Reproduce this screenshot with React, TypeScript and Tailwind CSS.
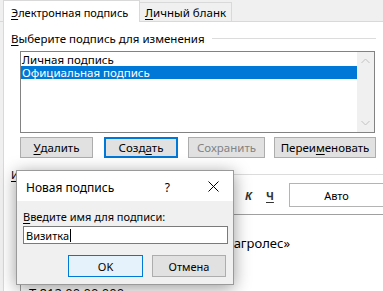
import type { ReactNode } from 'react';

function Key({ children }: { children: ReactNode }) {
  return <span className="underline decoration-1 underline-offset-[2px]">{children}</span>;
}

function Button({
  children,
  width,
  className = '',
  disabled,
  focused,
}: {
  children: ReactNode;
  width: string;
  className?: string;
  disabled?: boolean;
  focused?: boolean;
}) {
  return (
    <div
      className={`flex h-[21px] items-center justify-center ${width} ${className} ${
        focused ? 'border-2 border-[#0078d7] bg-[#e1e1e1]' : 'border border-[#adadad] bg-[#e1e1e1]'
      } ${disabled ? 'text-[#838383]' : 'text-black'}`}
    >
      {children}
    </div>
  );
}

function NewSignatureDialog() {
  return (
    <div className="absolute left-[16px] top-[170px] flex h-[115px] w-[218px] flex-col border border-[#9a9a9a] bg-[#f0f0f0] shadow-[0_3px_16px_rgba(0,0,0,0.4)]">
      <div className="flex h-[30px] shrink-0 items-center bg-white pl-[9px]">
        <span className="flex-1 pt-[2px] text-[12px]">Новая подпись</span>
        <span className="mr-[38px] pt-[2px] text-[12px]">?</span>
        <svg className="mr-[14px]" width="11" height="11" viewBox="0 0 11 11">
          <path d="M0.5 0.5L10.5 10.5M10.5 0.5L0.5 10.5" stroke="#000" strokeWidth="1" />
        </svg>
      </div>
      <div className="flex flex-1 flex-col px-[6px] pt-[8px]">
        <div className="h-[15px] leading-[15px]">
          <Key>В</Key>ведите имя для подписи:
        </div>
        <div className="mt-[2px] flex h-[18px] w-[205px] items-center border border-[#7a7a7a] bg-white pl-[2px]">
          Визитка
          <span className="ml-[1px] h-[13px] w-px bg-black" />
        </div>
        <div className="mt-[11px] flex justify-end gap-[9px] pr-[1px]">
          <div className="flex h-[22px] w-[75px] items-center justify-center border border-[#0078d7] bg-[#e5f1fb]">
            OK
          </div>
          <div className="flex h-[22px] w-[74px] items-center justify-center border border-[#adadad] bg-[#e1e1e1]">
            Отмена
          </div>
        </div>
      </div>
    </div>
  );
}

export default function App() {
  return (
    <div className="relative flex h-[291px] w-[383px] flex-col overflow-hidden bg-[#f0f0f0] font-['Noto_Sans','Liberation_Sans',sans-serif] text-[11px] leading-[15px] text-black">
      {/* tabs */}
      <div className="flex h-[22px] shrink-0 items-end">
        <div className="h-full w-[3px] border-b border-[#d9d9d9]" />
        <div className="flex h-[22px] w-[137px] items-center border-x border-t border-[#d9d9d9] bg-white pl-[7px] pt-[1px] text-[11px]">
          <Key>Э</Key>лектронная подпись
        </div>
        <div className="flex h-[20px] w-[92px] items-center border border-l-0 border-[#d9d9d9] bg-[#f0f0f0] pl-[5px] pt-[1px] text-[11.5px]">
          <Key>Л</Key>ичный бланк
        </div>
        <div className="h-full flex-1 border-b border-[#d9d9d9]" />
      </div>

      {/* page */}
      <div className="ml-[3px] flex flex-1 flex-col border-l border-[#d9d9d9] bg-white">
        <div className="mt-[9px] mr-[7px] flex h-[15px] items-center pl-[7px]">
          <span className="text-[11.5px]">
            <Key>В</Key>ыберите подпись для изменения
          </span>
          <div className="ml-[7px] h-px flex-1 bg-[#dcdcdc]" />
        </div>

        <div className="ml-[16px] mt-[5px] flex h-[82px] w-[355px] border border-[#828282]">
          <div className="flex flex-1 flex-col pt-[1px] text-[11.5px]">
            <div className="h-[13px] pl-[1px] leading-[13px]">Личная подпись</div>
            <div className="h-[13px] bg-[#0078d7] pl-[1px] leading-[13px] text-white">Официальная подпись</div>
          </div>
          <div className="flex w-[17px] flex-col items-center justify-between bg-[#f0f0f0] py-[6px]">
            <svg width="9" height="6" viewBox="0 0 9 6">
              <path d="M0.5 5L4.5 1L8.5 5" fill="none" stroke="#c2c2c2" strokeWidth="1" />
            </svg>
            <svg width="9" height="6" viewBox="0 0 9 6">
              <path d="M0.5 1L4.5 5L8.5 1" fill="none" stroke="#c2c2c2" strokeWidth="1" />
            </svg>
          </div>
        </div>

        <div className="ml-[16px] mt-[4px] flex text-[11.5px]">
          <Button width="w-[73px]">
            <Key>У</Key>далить
          </Button>
          <Button width="w-[74px]" className="ml-[11px]" focused>
            Созд<Key>а</Key>ть
          </Button>
          <Button width="w-[77px]" className="ml-[10px]" disabled>
            Сохранить
          </Button>
          <Button width="w-[102px]" className="ml-[9px]">
            Переи<Key>м</Key>еновать
          </Button>
        </div>

        <div className="mt-[9px] flex h-[15px] items-center pl-[7px]">
          <span>
            <Key>И</Key>зменить подпись
          </span>
          <div className="ml-[6px] h-px flex-1 bg-[#dcdcdc]" />
        </div>

        <div className="mt-[1px] flex h-[24px] items-center pl-[16px]">
          <div className="h-[22px] w-[150px] border border-[#adadad]" />
          <div className="ml-[6px] h-[22px] w-[40px] border border-[#adadad]" />
          <span className="ml-[6px] w-[14px] font-bold">Ж</span>
          <span className="ml-[9px] w-[14px] font-bold italic text-[#333]">К</span>
          <span className="ml-[7px] w-[16px] font-bold text-[#333] underline decoration-1 underline-offset-[2px]">Ч</span>
          <div className="ml-[7px] flex h-[24px] flex-1 items-center justify-center border border-r-0 border-[#b4b4b4]">
            Авто
          </div>
        </div>

        <div className="ml-[16px] mt-[7px] flex flex-1 flex-col border-l border-t border-[#a0a0a0] pl-[8px] text-[13px] leading-[17px]">
          <div className="mt-[20px] w-[261px] text-right">ООО «Мегаагролес»</div>
          <div className="mt-[33px]">Т 812 00 00 000</div>
        </div>
      </div>

      <NewSignatureDialog />
    </div>
  );
}
